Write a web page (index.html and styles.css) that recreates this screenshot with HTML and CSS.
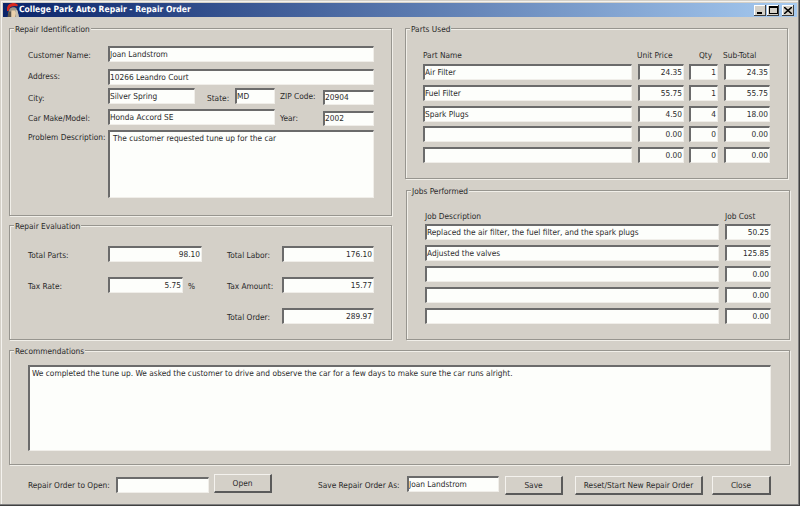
FILE: index.html
```html
<!DOCTYPE html>
<html lang="en">
<head>
<meta charset="utf-8">
<title>College Park Auto Repair - Repair Order</title>
<link rel="stylesheet" href="styles.css">
</head>
<body>
<div class="window">
  <header class="titlebar">
    <svg class="app-icon" width="14" height="14" viewBox="0 0 14 14">
      <path d="M1 6C1 2 4 0 8 0c2 0 3 1 4 2l-1 1.500C9 2.500 5 3 3.500 5.500L2.500 8H1z" fill="#d8281f"/>
      <path d="M3.500 6c1.500-2 5.500-2.500 7-.5l2 6.500v2H2.500L2 11z" fill="#9c9486"/>
      <path d="M5.500 7.500h3.500l1 2.500-1 4H5.500z" fill="#ecd2ac"/>
      <path d="M2.500 8.500h2.500V14H1.500z" fill="#5a544c"/>
      <path d="M9.500 6.500l2 1 1.500 6.500h-3z" fill="#c8c1b2"/>
    </svg>
    <span class="title-text">College Park Auto Repair - Repair Order</span>
    <div class="win-buttons">
      <div class="win-btn"><svg width="8" height="7" viewBox="0 0 8 7"><path d="M1 5h5v2H1z" fill="#000"/></svg></div>
      <div class="win-btn"><svg width="9" height="8" viewBox="0 0 9 8"><path d="M0 0h9v8H0zM1 2v5h7V2z" fill="#000" fill-rule="evenodd"/></svg></div>
      <div class="win-btn win-close"><svg width="8" height="7" viewBox="0 0 8 7"><path d="M0 0l8 7M8 0L0 7" stroke="#000" stroke-width="1.500" fill="none"/></svg></div>
    </div>
  </header>

  <div class="main">
    <div class="col-left">
      <section class="group group-id">
        <h2 class="legend">Repair Identification</h2>
        <div class="row row-gap7">
          <span class="label lbl-main lbl-mid">Customer Name:</span>
          <div class="field fill">Joan Landstrom</div>
        </div>
        <div class="row row-gap3">
          <span class="label lbl-main">Address:</span>
          <div class="field fill">10266 Leandro Court</div>
        </div>
        <div class="row row-gap4">
          <span class="label lbl-main lbl-low">City:</span>
          <div class="field w-city">Silver Spring</div>
          <span class="label lbl-state lbl-low">State:</span>
          <div class="field w-state">MD</div>
          <span class="label lbl-zip">ZIP Code:</span>
          <div class="field w-zip drop2">20904</div>
        </div>
        <div class="row row-gap4">
          <span class="label lbl-main lbl-mid">Car Make/Model:</span>
          <div class="field w-car">Honda Accord SE</div>
          <span class="label lbl-year lbl-mid">Year:</span>
          <div class="field w-zip drop2">2002</div>
        </div>
        <div class="row">
          <span class="label lbl-main">Problem Description:</span>
          <div class="field fill area-problem">The customer requested tune up for the car</div>
        </div>
      </section>

      <section class="group group-eval">
        <h2 class="legend">Repair Evaluation</h2>
        <div class="eval-grid">
          <span class="label">Total Parts:</span>
          <div class="field num">98.10</div>
          <span class="label eval-right">Total Labor:</span>
          <div class="field num">176.10</div>

          <span class="label">Tax Rate:</span>
          <div class="tax-cell"><div class="field num w-tax">5.75</div><span class="label pct">%</span></div>
          <span class="label eval-right">Tax Amount:</span>
          <div class="field num">15.77</div>

          <span class="label eval-right eval-last">Total Order:</span>
          <div class="field num eval-last-field">289.97</div>
        </div>
      </section>
    </div>

    <div class="col-right">
      <section class="group group-parts">
        <h2 class="legend">Parts Used</h2>
        <div class="parts-head">
          <span class="label">Part Name</span>
          <span class="label head-price">Unit Price</span>
          <span class="label head-qty">Qty</span>
          <span class="label head-price">Sub-Total</span>
        </div>
        <div class="parts-grid">
          <div class="field">Air Filter</div><div class="field num cell-price">24.35</div><div class="field num cell-qty">1</div><div class="field num cell-price">24.35</div>
          <div class="field">Fuel Filter</div><div class="field num cell-price">55.75</div><div class="field num cell-qty">1</div><div class="field num cell-price">55.75</div>
          <div class="field">Spark Plugs</div><div class="field num cell-price">4.50</div><div class="field num cell-qty">4</div><div class="field num cell-price">18.00</div>
          <div class="field"></div><div class="field num cell-price">0.00</div><div class="field num cell-qty">0</div><div class="field num cell-price">0.00</div>
          <div class="field"></div><div class="field num cell-price">0.00</div><div class="field num cell-qty">0</div><div class="field num cell-price">0.00</div>
        </div>
      </section>

      <section class="group group-jobs">
        <h2 class="legend">Jobs Performed</h2>
        <div class="jobs-head">
          <span class="label">Job Description</span>
          <span class="label">Job Cost</span>
        </div>
        <div class="jobs-grid">
          <div class="field">Replaced the air filter, the fuel filter, and the spark plugs</div><div class="field num">50.25</div>
          <div class="field">Adjusted the valves</div><div class="field num">125.85</div>
          <div class="field"></div><div class="field num">0.00</div>
          <div class="field"></div><div class="field num">0.00</div>
          <div class="field"></div><div class="field num">0.00</div>
        </div>
      </section>
    </div>
  </div>

  <section class="group group-rec">
    <h2 class="legend">Recommendations</h2>
    <div class="field area-rec">We completed the tune up. We asked the customer to drive and observe the car for a few days to make sure the car runs alright.</div>
  </section>

  <footer class="actions">
    <span class="label act-open-label">Repair Order to Open:</span>
    <div class="field w-open"></div>
    <div class="button btn-open">Open</div>
    <span class="label act-save-label">Save Repair Order As:</span>
    <div class="field w-saveas">Joan Landstrom</div>
    <div class="button btn-save">Save</div>
    <div class="button btn-reset">Reset/Start New Repair Order</div>
    <div class="button btn-close">Close</div>
  </footer>
</div>
</body>
</html>
```

FILE: styles.css
```css
* { box-sizing: border-box; }
html, body { margin: 0; padding: 0; }
body {
  width: 800px;
  height: 506px;
  overflow: hidden;
  background: #d4d0c8;
  font-family: "DejaVu Sans Condensed", "Liberation Sans", sans-serif;
  font-size: 8.250px;
  color: #2a2a2a;
  text-rendering: geometricPrecision;
}
.window {
  width: 800px;
  height: 506px;
  padding: 3px;
  background: #d4d0c8;
  box-shadow: inset -1px -1px #404040, inset -2px -2px #808080, inset 1px 1px #d4d0c8, inset 2px 2px #f4f2ee;
}

/* title bar */
.titlebar {
  height: 14px;
  display: flex;
  align-items: center;
  background: linear-gradient(90deg, #0a246a, #a6caf0);
  color: #fff;
  font-weight: 700;
  font-size: 8.500px;
  line-height: 13px;
}
.app-icon { margin-left: 3px; flex: none; }
.title-text { margin-left: -1px; padding-top: 1px; }
.win-buttons { margin-left: auto; margin-right: 3px; display: flex; gap: 1px; }
.win-btn {
  width: 12px;
  height: 11px;
  background: #d4d0c8;
  display: flex;
  align-items: center;
  justify-content: center;
  box-shadow: inset -1px -1px #404040, inset 1px 1px #fff;
}
.win-close { margin-left: 2px; }

/* layout */
.main {
  display: flex;
  gap: 13px;
  margin: 11px 0 0 6px;
}
.col-left { width: 383px; display: flex; flex-direction: column; gap: 9px; }
.col-right { width: 385px; display: flex; flex-direction: column; gap: 11px; }

.group {
  position: relative;
  border: 1px solid #97958f;
  box-shadow: 1px 1px #f1efe9, inset 1px 1px #f1efe9;
}
.legend {
  position: absolute;
  top: -5px;
  left: 4px;
  margin: 0;
  padding: 0 1px;
  background: #d4d0c8;
  font-size: inherit;
  font-weight: 400;
  line-height: 11px;
  height: 11px;
}
.label { padding-top: 0; line-height: 14px; white-space: nowrap; }

.field {
  height: 16px;
  background: #fdfefb;
  border-style: solid;
  border-width: 2px 1px 1px 2px;
  border-color: #6b6b6b #f0eee9 #f0eee9 #6b6b6b;
  padding: 0;
  line-height: 12px;
  white-space: nowrap;
  overflow: hidden;
}
.num { text-align: right; padding: 0 1px 0 0; }

/* Repair Identification */
.group-id { height: 188px; padding: 17px 17px 0 18px; }
.row { display: flex; align-items: flex-start; }
.row-gap7 { margin-bottom: 7px; }
.row-gap3 { margin-bottom: 3px; }
.row-gap4 { margin-bottom: 4px; }
.fill { flex: 1; }
.lbl-main { width: 80px; flex: none; }
.lbl-mid { margin-top: 2px; }
.lbl-low { margin-top: 3px; }
.lbl-state { margin: 3px 0 0 12px; width: 28px; }
.lbl-zip { margin: 1px 0 0 5px; width: 43px; }
.lbl-year { margin: 2px 0 0 5px; width: 43px; }
.w-city { width: 87px; }
.w-state { width: 40px; }
.w-zip { width: 51px; }
.w-car { width: 167px; }
.drop2 { margin-top: 2px; height: 15px; line-height: 11px; }
.area-problem { height: 68px; white-space: normal; padding-left: 3px; }

/* Repair Evaluation */
.group-eval { height: 115px; padding: 20px 17px 0 18px; }
.eval-grid {
  display: grid;
  grid-template-columns: 80px 94px 80px 92px;
  row-gap: 15px;
  align-items: start;
}
.eval-grid .label { margin-top: 2px; }
.eval-right { margin-left: 25px; grid-column: 3; }
.eval-last { grid-row: 3; }
.eval-last-field { grid-row: 3; grid-column: 4; }
.tax-cell { display: flex; align-items: flex-start; }
.w-tax { width: 75px; }
.eval-grid .pct { margin: 2px 0 0 5px; }

/* Parts */
.group-parts { height: 151px; width: 383px; padding: 19px 0 0 17px; }
.parts-head, .parts-grid {
  display: grid;
  grid-template-columns: 209px 52px 34px 52px;
}
.parts-head { height: 16px; }
.parts-grid { row-gap: 4.800px; }
.head-price { padding-left: 5px; }
.head-qty { padding-left: 15px; }
.cell-price { width: 46px; justify-self: end; }
.cell-qty { width: 29px; justify-self: end; }

/* Jobs */
.group-jobs { height: 150px; margin-left: 1px; padding: 18px 0 0 18px; }
.jobs-head, .jobs-grid {
  display: grid;
  grid-template-columns: 300px 46px;
}
.jobs-head { height: 15px; }
.jobs-grid { row-gap: 5px; }
.jobs-grid .field:nth-child(odd) { width: 294px; }

/* Recommendations */
.group-rec { height: 115px; width: 781px; margin: 10px 0 0 6px; padding: 14px 0 0 18px; }
.area-rec { width: 743px; height: 86px; padding: 0 0 0 2px; white-space: normal; }

/* Footer */
.actions { display: flex; align-items: flex-start; padding: 9px 0 0 25px; }
.button {
  height: 19px;
  background: #d4d0c8;
  text-align: center;
  line-height: 17px;
  white-space: nowrap;
  border-style: solid;
  border-width: 1px 2px 2px 1px;
  border-color: #f4f2ee #5a5a5a #5a5a5a #f4f2ee;
}
.act-open-label { width: 88px; margin-top: 4px; flex: none; }
.w-open { width: 93px; margin-top: 3px; }
.btn-open { width: 58px; margin-left: 5px; }
.act-save-label { width: 89px; margin: 4px 0 0 46px; flex: none; }
.w-saveas { width: 92px; margin-top: 2px; }
.btn-save { width: 58px; margin: 2px 0 0 6px; }
.btn-reset { width: 128px; margin: 2px 0 0 12px; }
.btn-close { width: 59px; margin: 2px 0 0 9px; }
```
